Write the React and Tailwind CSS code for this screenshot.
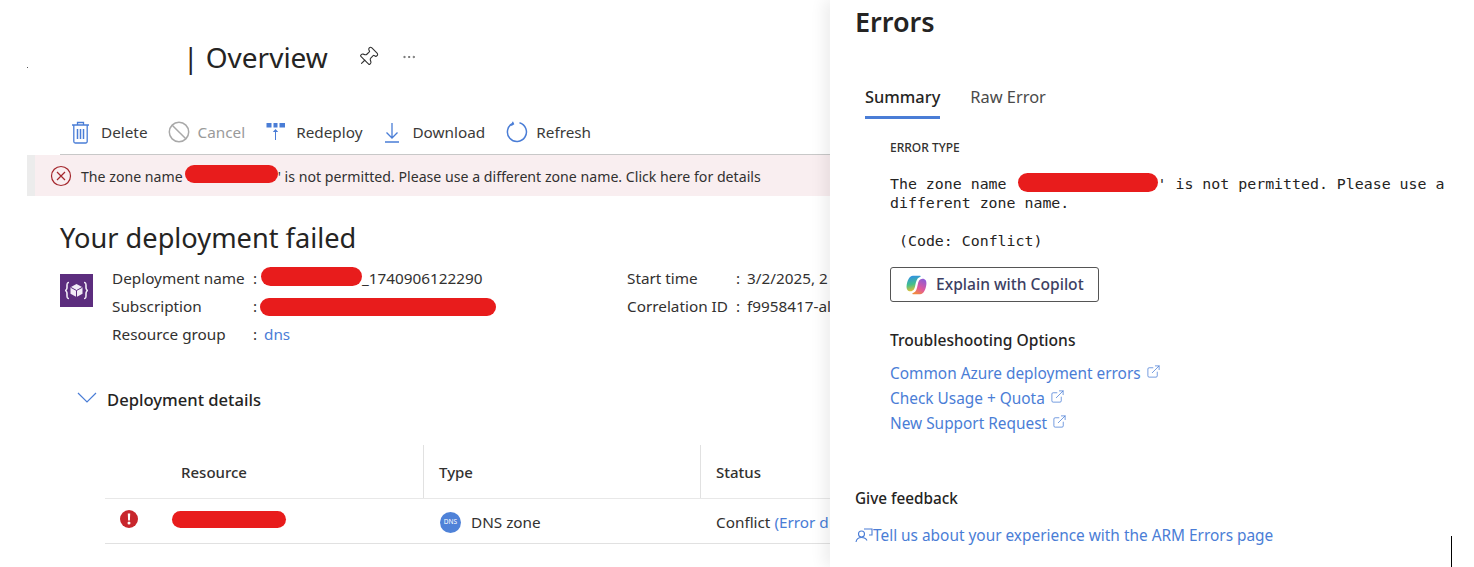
import React from 'react';
import { Pin, MoreHorizontal, ExternalLink } from 'lucide-react';

const BLUE = '#4a7dd6';

function TrashIcon() {
  return (
    <svg width="19" height="23" viewBox="0 0 19 23" fill="none" stroke={BLUE} strokeWidth="1.3">
      <path d="M1 4h17M6.500 4V1.500h6V4M2.800 4v16.500a1.500 1.500 0 0 0 1.500 1.500h10.400a1.500 1.500 0 0 0 1.500-1.500V4" />
      <path d="M6.500 8v10M9.500 8v10M12.500 8v10" strokeWidth="1.500" />
    </svg>
  );
}

function CancelIcon() {
  return (
    <svg width="22" height="22" viewBox="0 0 22 22" fill="none" stroke="#a9a9a9" strokeWidth="1.500">
      <circle cx="11" cy="11" r="9.700" />
      <path d="M4.200 4.200l13.600 13.600" />
    </svg>
  );
}

function RedeployIcon() {
  return (
    <svg width="20" height="20" viewBox="0 0 20 20" fill={BLUE}>
      <rect x="0.500" y="1" width="5" height="4.500" />
      <rect x="7.500" y="1" width="4" height="4.500" />
      <rect x="13.500" y="1" width="5.500" height="4.500" />
      <path d="M9 18v-8H6.800l2.700-3 2.700 3H10v8z" />
    </svg>
  );
}

function DownloadIcon() {
  return (
    <svg width="16" height="21" viewBox="0 0 16 21" fill="none" stroke={BLUE} strokeWidth="1.300">
      <path d="M8 1v15M2.500 10.500 8 16l5.500-5.500M1 20h14" />
    </svg>
  );
}

function RefreshIcon() {
  return (
    <svg width="22" height="22" viewBox="0 0 22 22" fill="none" stroke={BLUE} strokeWidth="1.500">
      <path d="M7 2.300A9.500 9.500 0 1 0 13.500 1.800" />
      <path d="M6.500 0.800 7.500 3l-2.300 1.500" strokeWidth="1.300" />
    </svg>
  );
}

function DeploymentIcon() {
  return (
    <div className="w-[33px] h-[33px] bg-[#5c2d7e] flex items-center justify-center shrink-0">
      <svg width="25" height="19" viewBox="0 0 25 19" fill="none" stroke="#f1ebf6" strokeWidth="1.600">
        <path d="M5 1.500c-2 0-2 1-2 3v2c0 1.500-1 3-2 3 1 0 2 1.500 2 3v2c0 2 0 3 2 3" />
        <path d="M20 1.500c2 0 2 1 2 3v2c0 1.500 1 3 2 3-1 0-2 1.500-2 3v2c0 2 0 3-2 3" />
        <path d="M12.500 3 6.500 6.200v6.600l6 3.200 6-3.200V6.200z" fill="#f1ebf6" stroke="none" />
        <path d="M6.500 6.200l6 3.300 6-3.300M12.500 9.500V16" stroke="#5c2d7e" strokeWidth="1" />
      </svg>
    </div>
  );
}

function CopilotIcon() {
  return (
    <svg width="21" height="20" viewBox="0 0 21 20">
      <defs>
        <linearGradient id="cpA" x1="0.300" y1="0" x2="0.500" y2="1">
          <stop offset="0" stopColor="#2f8fe8" />
          <stop offset="0.550" stopColor="#45c08a" />
          <stop offset="1" stopColor="#f2c02e" />
        </linearGradient>
        <linearGradient id="cpB" x1="0.800" y1="0" x2="0.300" y2="1">
          <stop offset="0" stopColor="#8a5cd8" />
          <stop offset="0.600" stopColor="#e0589c" />
          <stop offset="1" stopColor="#f28a3c" />
        </linearGradient>
      </defs>
      <path d="M7 .8h7c1.200 0 1 1-.5 1.500-2.500 1-3.500 4-4.200 8-.6 3.800-2 6-4.800 6C1.500 16.300.3 14 .6 11 1 6.500 3 .8 7 .8z" fill="url(#cpA)" />
      <path d="M14 19.200H7c-1.200 0-1-1 .5-1.500 2.500-1 3.500-4 4.200-8 .6-3.800 2-6 4.800-6 3 0 4.200 2.300 3.900 5.300-.4 4.500-2.400 10.200-6.400 10.200z" fill="url(#cpB)" />
    </svg>
  );
}

function ToolbarButton({ icon, label, muted, className }) {
  return (
    <div className={`flex items-center ${className}`}>
      {icon}
      <span className={muted ? 'text-[#9a9a9a]' : 'text-[#3b3a39]'}>{label}</span>
    </div>
  );
}

function InfoRow({ label, children }) {
  return (
    <div className="h-[28px] flex items-center">
      <span className="w-[141px] shrink-0">{label}</span>
      <span className="w-[8px] shrink-0">:</span>
      <span className="flex items-center whitespace-nowrap">{children}</span>
    </div>
  );
}

function Redacted({ className }) {
  return <span className={`inline-block bg-[#e81c1c] rounded-full shrink-0 ${className}`} />;
}

function LinkRow({ label }) {
  return (
    <div className="h-[25px] flex items-center gap-[5px] text-[#4a7dd6]">
      <span>{label}</span>
      <ExternalLink className="w-[15px] h-[15px] -mt-[5px]" strokeWidth={1.2} />
    </div>
  );
}

export default function App() {
  return (
    <div className="relative w-[1474px] h-[567px] flex bg-white overflow-hidden font-['Noto_Sans',sans-serif] text-[15.3px] text-[#323130]">
      <span className="absolute left-[27px] top-[67px] w-px h-px bg-[#555]" />

      {/* Deployment page */}
      <main className="w-[830px] h-full shrink-0 overflow-hidden">
        <div className="h-[114px] flex items-center pl-[183px]">
          <h1 className="text-[28px] text-[#252423] whitespace-nowrap">| Overview</h1>
          <Pin className="w-[22px] h-[22px] ml-[29px] rotate-45 text-[#333]" strokeWidth={1.2} />
          <MoreHorizontal className="w-[16px] h-[16px] ml-[22px] text-[#555]" strokeWidth={1.2} />
        </div>

        <div className="h-[41px] ml-[60px] pb-1 flex items-center border-b border-[#c8c8c8]">
          <ToolbarButton className="ml-[11px] gap-[11px]" icon={<TrashIcon />} label="Delete" />
          <ToolbarButton className="ml-[20px] gap-[8px]" icon={<CancelIcon />} label="Cancel" muted />
          <ToolbarButton className="ml-[21px] gap-[10px]" icon={<RedeployIcon />} label="Redeploy" />
          <ToolbarButton className="ml-[22px] gap-[12px]" icon={<DownloadIcon />} label="Download" />
          <ToolbarButton className="ml-[21px] gap-[8px]" icon={<RefreshIcon />} label="Refresh" />
        </div>

        <div className="h-[41px] ml-[27px] border-l-[8px] border-[#ececec] bg-[#f9eef0] flex items-center pl-[15px] pt-[2px] text-[14.15px] whitespace-nowrap">
          <svg width="22" height="22" viewBox="0 0 22 22" fill="none" stroke="#a4262c" strokeWidth="1.200" className="mr-[9px] shrink-0 -mt-[2px]">
            <circle cx="11" cy="11" r="9.500" />
            <path d="M7 7l8 8M15 7l-8 8" />
          </svg>
          <span>The zone name</span>
          <Redacted className="w-[93px] h-[18px] ml-[2px] -mt-[6px]" />
          <span>' is not permitted. Please use a different zone name. Click here for details</span>
        </div>

        <h2 className="mt-[22px] h-[40px] ml-[60px] flex items-center text-[27.2px] text-[#252423] whitespace-nowrap">Your deployment failed</h2>

        <div className="mt-[6px] ml-[60px] flex">
          <div className="pt-[10px]">
            <DeploymentIcon />
          </div>
          <div className="ml-[19px] w-[515px] shrink-0">
            <InfoRow label="Deployment name">
              <Redacted className="w-[101px] h-[19px] -mt-[3px]" />
              <span>_1740906122290</span>
            </InfoRow>
            <InfoRow label="Subscription">
              <Redacted className="w-[236px] h-[18px] -ml-[1px] mt-[2px]" />
            </InfoRow>
            <InfoRow label="Resource group">
              <span className="ml-[3px] text-[#4a7dd6]">dns</span>
            </InfoRow>
          </div>
          <div>
            <div className="h-[28px] flex items-center whitespace-nowrap">
              <span className="w-[109px] shrink-0">Start time</span>
              <span className="w-[11px] shrink-0">:</span>
              <span>3/2/2025, 2</span>
            </div>
            <div className="h-[28px] flex items-center whitespace-nowrap">
              <span className="w-[109px] shrink-0">Correlation ID</span>
              <span className="w-[11px] shrink-0">:</span>
              <span>f9958417-al</span>
            </div>
          </div>
        </div>

        <div className="mt-[38px] h-[28px] ml-[77px] flex items-center">
          <svg width="20" height="12" viewBox="0 0 20 12" fill="none" stroke="#4a7dd6" strokeWidth="1.200" className="-mt-[5px] shrink-0">
            <path d="M1 1l9 9 9-9" />
          </svg>
          <span className="ml-[10px] text-[16.6px] font-medium text-[#252423]">Deployment details</span>
        </div>

        <div className="mt-[31px] ml-[105px]">
          <div className="h-[54px] flex border-b border-[#e8e8e8] font-medium text-[15px] text-[#323130]">
            <div className="w-[319px] shrink-0 h-[53px] border-r border-[#e1e1e1] pl-[76px] pt-[2px] flex items-center">Resource</div>
            <div className="w-[277px] shrink-0 h-[53px] border-r border-[#e1e1e1] pl-[15px] pt-[2px] flex items-center">Type</div>
            <div className="pl-[15px] h-[53px] pt-[2px] flex items-center">Status</div>
          </div>
          <div className="h-[45px] flex border-b border-[#e1e1e1] items-center pt-[2px] whitespace-nowrap">
            <div className="w-[319px] shrink-0 flex items-center -mt-[6px]">
              <svg width="18" height="18" viewBox="0 0 18 18" className="ml-[15px] shrink-0">
                <circle cx="9" cy="9" r="9" fill="#c8262c" />
                <path d="M7.800 3.500h2.400l-.3 7H8.100zM9 11.500a1.500 1.500 0 1 1 0 3 1.500 1.500 0 0 1 0-3z" fill="#fff" />
              </svg>
              <Redacted className="w-[114px] h-[17px] ml-[34px]" />
            </div>
            <div className="w-[277px] shrink-0 pl-[16px] flex items-center">
              <span className="w-[21px] h-[21px] rounded-full bg-[#4f82d8] text-white text-[6.5px] flex items-center justify-center shrink-0">DNS</span>
              <span className="ml-[10px]">DNS zone</span>
            </div>
            <div className="pl-[15px]">
              Conflict <span className="text-[#4a7dd6]">(Error d</span>
            </div>
          </div>
        </div>
      </main>

      {/* Errors panel */}
      <aside className="relative z-10 flex-1 h-full bg-white pl-[25px] shadow-[-6px_0_14px_rgba(0,0,0,0.07)]">
        <h2 className="h-[44px] flex items-center text-[27px] font-semibold text-[#252423]">Errors</h2>

        <div className="mt-[34px] ml-[10px] flex gap-[30px] text-[16.4px]">
          <div className="h-[41px] flex items-center border-b-[3px] border-[#4a7dd6] font-medium text-[#252423]">Summary</div>
          <div className="h-[41px] flex items-center text-[#4a4a4a] pb-[3px]">Raw Error</div>
        </div>

        <div className="ml-[35px]">
          <div className="mt-[21px] h-[16px] flex items-center text-[12px] font-medium text-[#323130]">ERROR TYPE</div>

          <div className="mt-[19px] font-['DejaVu_Sans_Mono',monospace] text-[14.9px] leading-[19px] text-[#252423] whitespace-nowrap">
            <div className="flex items-center">
              <span>The zone name</span>
              <Redacted className="w-[140px] h-[19px] ml-[11px] -mt-[5px]" />
              <span>' is not permitted. Please use a</span>
            </div>
            <div>different zone name.</div>
            <div className="mt-[19px] pl-[9px]">(Code: Conflict)</div>
          </div>

          <button className="mt-[16px] w-[209px] h-[35px] border border-[#555] rounded-[3px] flex items-center pl-[15px] gap-[9px] font-medium text-[15.6px] text-[#3d3f63]">
            <CopilotIcon />
            Explain with Copilot
          </button>

          <div className="mt-[29px] h-[20px] flex items-center text-[15.6px] font-medium text-[#252423]">Troubleshooting Options</div>

          <div className="mt-[10px] text-[15.4px]">
            <LinkRow label="Common Azure deployment errors" />
            <LinkRow label="Check Usage + Quota" />
            <LinkRow label="New Support Request" />
          </div>
        </div>

        <div className="mt-[52px] h-[20px] flex items-center font-medium text-[#252423]">Give feedback</div>
        <div className="mt-[18px] h-[20px] flex items-center text-[15.4px] text-[#4a7dd6]">
          <svg width="18" height="18" viewBox="0 0 18 18" fill="none" stroke="#4a7dd6" strokeWidth="1.100" className="shrink-0 -mt-[3px]">
            <circle cx="6.500" cy="8" r="3" />
            <path d="M1 16c.5-3 2.500-4.500 5.500-4.500s4.500 1 5.500 3M9 3h8v6h-3" />
          </svg>
          <span>Tell us about your experience with the ARM Errors page</span>
        </div>

        <span className="absolute left-[621px] top-[536px] w-px h-[31px] bg-black" />
      </aside>
    </div>
  );
}
